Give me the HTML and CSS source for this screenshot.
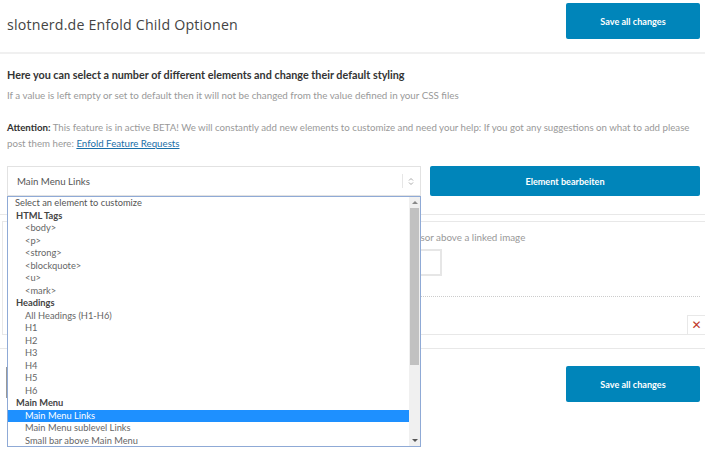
FILE: index.html
```html
<!DOCTYPE html>
<html>
<head>
<meta charset="utf-8">
<link rel="stylesheet" href="styles.css">
</head>
<body>
<header class="top">
  <h1 class="title">slotnerd.de Enfold Child Optionen</h1>
  <button class="btn btn-save">Save all changes</button>
</header>
<main class="content">
  <h2 class="lead">Here you can select a number of different elements and change their default styling</h2>
  <p class="muted">If a value is left empty or set to default then it will not be changed from the value defined in your CSS files</p>
  <p class="muted attention"><strong>Attention:</strong> This feature is in active BETA! We will constantly add new elements to customize and need your help: If you got any suggestions on what to add please post them here: <a href="#">Enfold Feature Requests</a></p>
  <div class="picker">
    <div class="select-wrap">
      <div class="select">
        <span>Main Menu Links</span>
        <span class="sel-arrow">
          <svg width="6" height="9" viewBox="0 0 6 9"><path d="M1 3.5 L3 1.5 L5 3.5 M1 5.5 L3 7.5 L5 5.5" fill="none" stroke="#aaa" stroke-width="1"/></svg>
        </span>
      </div>
      <div class="dropdown">
        <ul class="list">
          <li class="opt first">Select an element to customize</li>
          <li class="group">HTML Tags</li>
          <li class="opt">&lt;body&gt;</li>
          <li class="opt">&lt;p&gt;</li>
          <li class="opt">&lt;strong&gt;</li>
          <li class="opt">&lt;blockquote&gt;</li>
          <li class="opt">&lt;u&gt;</li>
          <li class="opt">&lt;mark&gt;</li>
          <li class="group">Headings</li>
          <li class="opt">All Headings (H1-H6)</li>
          <li class="opt">H1</li>
          <li class="opt">H2</li>
          <li class="opt">H3</li>
          <li class="opt">H4</li>
          <li class="opt">H5</li>
          <li class="opt">H6</li>
          <li class="group">Main Menu</li>
          <li class="opt selected">Main Menu Links</li>
          <li class="opt">Main Menu sublevel Links</li>
          <li class="opt">Small bar above Main Menu</li>
        </ul>
        <div class="scrollbar">
          <span class="arr up"></span>
          <span class="thumb"></span>
          <span class="arr down"></span>
        </div>
      </div>
    </div>
    <button class="btn btn-edit">Element bearbeiten</button>
  </div>
  <section class="panel">
    <div class="panel-inner">
      <p class="hint">Change the styling of the linked image when the user hovers with his cursor above a linked image</p>
      <div class="field"></div>
      <div class="dotted"></div>
      <div class="remove-row"><span class="remove">&#x2715;</span></div>
    </div>
  </section>
  <div class="foot">
    <span class="edge"></span>
    <button class="btn btn-save">Save all changes</button>
  </div>
</main>
</body>
</html>
```
FILE: styles.css
```css
* { box-sizing: border-box; }
html, body { margin: 0; padding: 0; background: #fff; }
body {
  width: 705px;
  height: 471px;
  overflow: hidden;
  font-family: Lato, "Open Sans", sans-serif;
  color: #444;
}
.top {
  display: flex;
  justify-content: space-between;
  align-items: flex-start;
  height: 54px;
  padding: 3px 5px 0 7px;
  border-bottom: 2px solid #f0f0f0;
}
.title {
  margin: 12px 0 0;
  font-family: "Open Sans", sans-serif;
  font-size: 14.2px;
  font-weight: 400;
  color: #444;
  letter-spacing: 0.2px;
}
.btn {
  border: none;
  border-radius: 2px;
  background: #0085ba;
  color: #fff;
  font-family: Lato, "Open Sans", sans-serif;
  font-size: 9.1px;
  font-weight: 700;
  cursor: pointer;
}
.btn-save { width: 134px; height: 36px; }
.content { padding: 13px 5px 0 7px; }
.lead {
  margin: 0;
  font-size: 10.8px;
  font-weight: 700;
  color: #333;
  line-height: 16px;
}
.muted {
  margin: 4px 0 0;
  font-size: 9.8px;
  color: #999;
  line-height: 16px;
}
.attention { margin-top: 16px; font-size: 9.7px; }
.attention strong { color: #333; font-weight: 700; }
.attention a { color: #1a6fa8; }
.picker {
  display: flex;
  gap: 9px;
  margin-top: 15px;
  height: 30px;
}
.select-wrap { position: relative; width: 414px; }
.select {
  display: flex;
  justify-content: space-between;
  align-items: center;
  height: 30px;
  padding: 0 6px 0 9px;
  border: 1px solid #e2e2e2;
  font-size: 9.7px;
  color: #555;
}
.sel-arrow {
  display: flex;
  align-items: center;
  height: 14px;
  padding-left: 5px;
  border-left: 1px solid #e6e6e6;
}
.btn-edit { flex: 1; height: 30px; }
.dropdown {
  position: absolute;
  top: 30px;
  left: 0;
  width: 414px;
  height: 251px;
  border: 1px solid #8faad6;
  background: #fff;
  display: flex;
  z-index: 5;
}
.list {
  list-style: none;
  margin: 0;
  padding: 0;
  flex: 1;
}
.list li {
  height: 12.5px;
  line-height: 12.5px;
  font-size: 9.3px;
  white-space: nowrap;
}
.opt { padding-left: 17px; color: #666; }
.opt.first { padding-left: 7px; color: #555; }
.group { padding-left: 8px; font-weight: 700; color: #444; }
.opt.selected { background: #1e90ff; color: #fff; }
.scrollbar {
  width: 11px;
  background: #f0f0f0;
  display: flex;
  flex-direction: column;
  align-items: center;
}
.arr { width: 0; height: 0; border-left: 3px solid transparent; border-right: 3px solid transparent; margin: 4px 0; }
.arr.up { border-bottom: 3px solid #888; }
.arr.down { border-top: 3px solid #555; margin-top: auto; }
.thumb { width: 9px; height: 157px; background: #c1c1c1; }
.panel {
  margin: 18px -5px 0 -7px;
  border-top: 1px solid #e8e8e8;
  border-bottom: 1px solid #e8e8e8;
  padding: 6px 0 13px 2px;
}
.panel-inner {
  border-top: 1px solid #e8e8e8;
  border-left: 1px solid #e8e8e8;
  border-bottom: 1px solid #e8e8e8;
  height: 114px;
  padding: 8px 5px 0 10px;
  display: flex;
  flex-direction: column;
}
.hint { margin: 0 0 0 97px; font-size: 9.8px; color: #999; line-height: 14px; white-space: nowrap; }
.field { width: 429px; height: 27px; margin-top: 5px; border: 2px solid #e6e6e6; }
.dotted { margin: 20px 0 0 0; border-top: 1px dotted #ccc; }
.remove-row { display: flex; justify-content: flex-end; margin-top: auto; margin-right: -5px; }
.remove {
  width: 18px;
  height: 19px;
  border-left: 1px solid #e8e8e8;
  border-top: 1px solid #e8e8e8;
  color: #c0392b;
  font-family: "DejaVu Sans", sans-serif;
  font-size: 12px;
  font-weight: 700;
  display: flex;
  align-items: center;
  justify-content: center;
}
.foot {
  display: flex;
  justify-content: space-between;
  align-items: flex-start;
  margin-top: 17px;
}
.edge { width: 2px; height: 31px; margin-top: 1px; margin-left: -1px; background: #999; }
```
